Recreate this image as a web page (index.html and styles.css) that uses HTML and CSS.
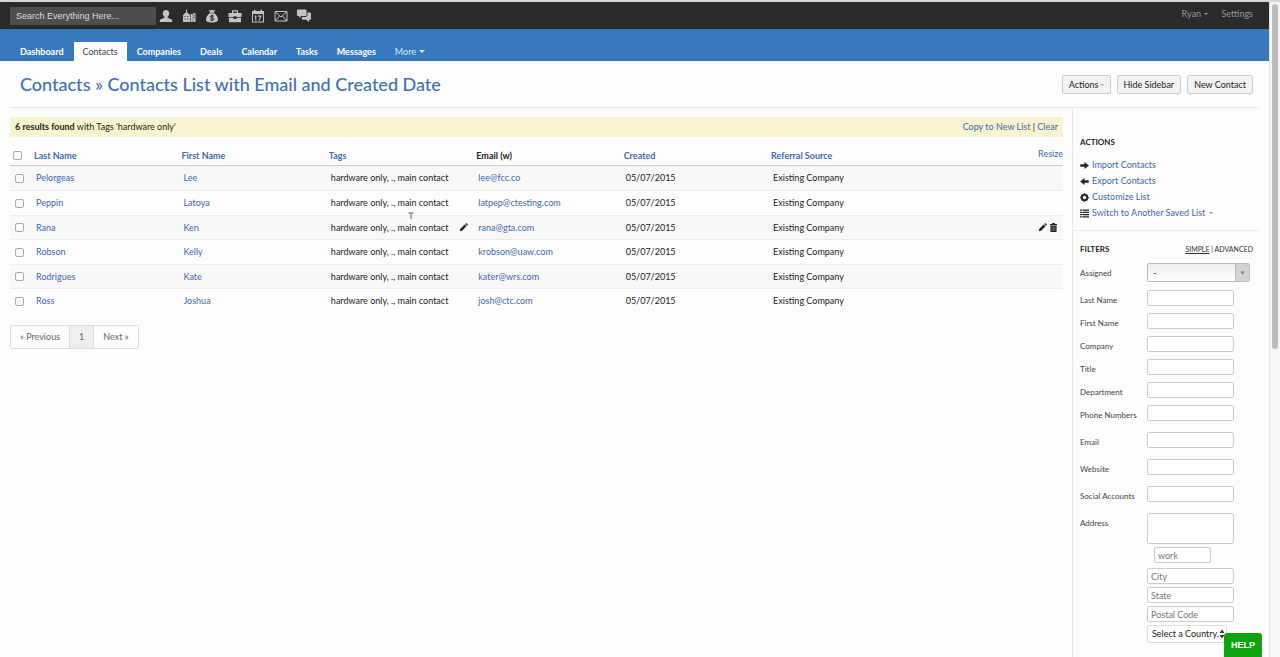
FILE: index.html
```
<!DOCTYPE html>
<html lang="en">
<head>
    <meta charset="UTF-8"/>
    <meta name="viewport" content="width=device-width, initial-scale=1.0"/>
    <title>Contacts List with Email and Created Date</title>
    <link rel="stylesheet" href="styles.css">
</head>

<body>
<div class="page">
    <header class="topbar">
        <input class="search" type="text" placeholder="Search Everything Here..." aria-label="Search everything"/>
        <div class="quick">
            <a href="#" aria-label="Contacts">
                <svg viewBox="0 0 14 14"><path d="M7 1c2 0 3.200 1.300 3.200 3.300 0 1.500-.7 2.800-1.600 3.500v1l3.400 1.400c1 .4 1.300 1 1.300 2.800H.7c0-1.800.3-2.400 1.300-2.800l3.400-1.400v-1C4.500 7.100 3.800 5.800 3.800 4.300 3.800 2.300 5 1 7 1z"/></svg>
            </a>
            <a href="#" aria-label="Companies">
                <svg viewBox="0 0 14 14"><path d="M4 .8h1v2.400L8 6v7H1V6l3-2.800zM8.600 5h2.200v8H8.600zM11.300 4h2.200v9h-2.200z"/><path class="cut" d="M2.500 7h1v1h-1zM5.300 7h1v1h-1zM2.500 9.500h1v1h-1zM5.300 9.500h1v1h-1zM11.900 5.500h.8v1h-.8zM11.900 8h.8v1h-.8z"/></svg>
            </a>
            <a href="#" aria-label="Deals">
                <svg viewBox="0 0 14 14"><path d="M4 .8l1.500.7L7 .7l1.500.8 1.500-.7-.9 3H4.900zM4.800 4.300h4.400C11.500 6 13 8.200 13 10.400 13 12.500 11.500 13.400 7 13.400S1 12.500 1 10.400C1 8.200 2.500 6 4.800 4.300z"/><path class="line" d="M9 7.300C8.200 6.500 5.300 6.400 5.300 7.800c0 1.500 3.600.8 3.600 2.400 0 1.400-3 1.300-3.900.4M7 5.600v6.600"/></svg>
            </a>
            <a href="#" aria-label="Cases">
                <svg viewBox="0 0 14 14"><path d="M4 4V1.200h6V4h3.500v4.200H8.500V7.200h-3v1H.5V4zm1.300 0h3.400V2.500H5.300zM1 9h4.500v1h3V9H13v4.300H1z"/></svg>
            </a>
            <a href="#" aria-label="Calendar">
                <svg viewBox="0 0 14 14"><path d="M1 2h2V.8h1.500V2h5V.8H11V2h2v11.500H1zm1 3v7.500h10V5z"/><path d="M3.700 6.500h1.600v5H4.200V7.700h-.7zM6.700 6.500h3.700v1.100l-1.800 3.900H7.400l1.700-3.800H6.700z"/></svg>
            </a>
            <a href="#" aria-label="Mail">
                <svg viewBox="0 0 14 14"><path class="stroke" d="M1 2.500h12v9.500H1zM1 2.500l6 5.500 6-5.500M1 12l4.500-5M13 12L8.500 7"/></svg>
            </a>
            <a href="#" aria-label="Messages">
                <svg viewBox="0 0 14 14"><path d="M1.300.5h7c.8 0 1.300.5 1.300 1.300v4c0 .8-.5 1.300-1.300 1.300H4.500L2.300 9V7.100h-1C.5 7.100 0 6.600 0 5.800v-4C0 1 .5.500 1.300.500zM10.400 3.500h2.300c.8 0 1.300.5 1.300 1.300v4.600c0 .8-.5 1.300-1.300 1.300H12v2.600l-3-2.600H6.200c-.8 0-1.300-.5-1.300-1.300V8H8c1.600 0 2.400-.8 2.400-2.200z"/></svg>
            </a>
        </div>
        <div class="account">
            <a href="#">Ryan <span class="caret"></span></a>
            <a href="#">Settings</a>
        </div>
    </header>

    <nav class="nav">
        <a href="#">Dashboard</a>
        <a href="#" class="active">Contacts</a>
        <a href="#">Companies</a>
        <a href="#">Deals</a>
        <a href="#">Calendar</a>
        <a href="#">Tasks</a>
        <a href="#">Messages</a>
        <a href="#" class="more">More <span class="caret"></span></a>
    </nav>

    <div class="heading">
        <h1>Contacts » Contacts List with Email and Created Date</h1>
        <div class="buttons">
            <button type="button">Actions<span class="caret"></span></button>
            <button type="button">Hide Sidebar</button>
            <button type="button">New Contact</button>
        </div>
    </div>

    <div class="content">
        <main class="main">
            <div class="notice">
                <span><b>6 results found</b> with Tags 'hardware only'</span>
                <span><a href="#">Copy to New List</a> | <a href="#">Clear</a></span>
            </div>
            <table class="list">
                <thead>
                <tr>
                    <th class="check"><input type="checkbox" aria-label="Select all"/></th>
                    <th><a href="#">Last Name</a></th>
                    <th><a href="#">First Name</a></th>
                    <th><a href="#">Tags</a></th>
                    <th>Email (w)</th>
                    <th><a href="#">Created</a></th>
                    <th><a href="#">Referral Source</a></th>
                    <th class="tools"><a href="#">Resize</a></th>
                </tr>
                </thead>
                <tbody>
                <tr>
                    <td><input type="checkbox" aria-label="Select Pelorgeas"/></td>
                    <td><a href="#">Pelorgeas</a></td>
                    <td><a href="#">Lee</a></td>
                    <td>hardware only, ., main contact</td>
                    <td><a href="#">lee@fcc.co</a></td>
                    <td>05/07/2015</td>
                    <td>Existing Company</td>
                    <td></td>
                </tr>
                <tr>
                    <td><input type="checkbox" aria-label="Select Peppin"/></td>
                    <td><a href="#">Peppin</a></td>
                    <td><a href="#">Latoya</a></td>
                    <td>hardware only, ., main contact</td>
                    <td><a href="#">latpep@ctesting.com</a></td>
                    <td>05/07/2015</td>
                    <td>Existing Company</td>
                    <td></td>
                </tr>
                <tr>
                    <td><input type="checkbox" aria-label="Select Rana"/></td>
                    <td><a href="#">Rana</a></td>
                    <td><a href="#">Ken</a></td>
                    <td>
                        <div class="editable">
                            hardware only, ., main contact
                            <svg class="icon" viewBox="0 0 10 10"><path d="M.8 9.200l.7-2.700L6.300 1.700l2 2L3.500 8.500zM6.900 1.100l.7-.6c.5-.4.900-.3 1.300.1l.5.5c.4.400.5.800.1 1.300l-.6.700z"/></svg>
                        </div>
                    </td>
                    <td><a href="#">rana@gta.com</a></td>
                    <td>05/07/2015</td>
                    <td>Existing Company</td>
                    <td>
                        <div class="row-tools">
                            <svg class="icon" viewBox="0 0 10 10"><path d="M.8 9.200l.7-2.700L6.300 1.700l2 2L3.500 8.500zM6.900 1.100l.7-.6c.5-.4.900-.3 1.300.1l.5.5c.4.400.5.800.1 1.300l-.6.700z"/></svg>
                            <svg class="icon" viewBox="0 0 10 10"><path d="M3.500 1V0h3v1H9v1.500H1V1zM1.600 3h6.800v6.400c0 .4-.2.600-.6.600H2.200c-.4 0-.6-.2-.6-.6z"/><path class="slats" d="M3.300 4v4.800M5 4v4.800M6.700 4v4.800"/></svg>
                        </div>
                    </td>
                </tr>
                <tr>
                    <td><input type="checkbox" aria-label="Select Robson"/></td>
                    <td><a href="#">Robson</a></td>
                    <td><a href="#">Kelly</a></td>
                    <td>hardware only, ., main contact</td>
                    <td><a href="#">krobson@uaw.com</a></td>
                    <td>05/07/2015</td>
                    <td>Existing Company</td>
                    <td></td>
                </tr>
                <tr>
                    <td><input type="checkbox" aria-label="Select Rodrigues"/></td>
                    <td><a href="#">Rodrigues</a></td>
                    <td><a href="#">Kate</a></td>
                    <td>hardware only, ., main contact</td>
                    <td><a href="#">kater@wrs.com</a></td>
                    <td>05/07/2015</td>
                    <td>Existing Company</td>
                    <td></td>
                </tr>
                <tr>
                    <td><input type="checkbox" aria-label="Select Ross"/></td>
                    <td><a href="#">Ross</a></td>
                    <td><a href="#">Joshua</a></td>
                    <td>hardware only, ., main contact</td>
                    <td><a href="#">josh@ctc.com</a></td>
                    <td>05/07/2015</td>
                    <td>Existing Company</td>
                    <td></td>
                </tr>
                </tbody>
            </table>
            <div class="pager">
                <a href="#">« Previous</a>
                <a href="#" class="current">1</a>
                <a href="#">Next »</a>
            </div>
        </main>

        <aside class="sidebar">
            <section class="actions">
                <h2>ACTIONS</h2>
                <ul>
                    <li><svg class="icon" viewBox="0 0 10 10"><path d="M.3 3.700h4.700V1L9.900 5 5 9V6.300H.3z"/></svg><a href="#">Import Contacts</a></li>
                    <li><svg class="icon" viewBox="0 0 10 10"><path d="M9.700 3.700H5V1L.1 5 5 9V6.300h4.700z"/></svg><a href="#">Export Contacts</a></li>
                    <li><svg class="icon" viewBox="0 0 10 10"><circle class="ring" cx="5" cy="5" r="3"/><path class="teeth" d="M5 .4v1.300M5 8.300v1.300M.4 5h1.300M8.300 5h1.300M1.800 1.800l.8.800M7.400 7.400l.8.800M8.200 1.800l-.8.800M2.600 7.400l-.8.800"/></svg><a href="#">Customize List</a></li>
                    <li><svg class="icon" viewBox="0 0 10 10"><path d="M0 .5h2V2H0zM2.700.5H10V2H2.700zM0 3h2v1.500H0zM2.700 3H10v1.500H2.700zM0 5.500h2V7H0zM2.700 5.500H10V7H2.700zM0 8h2v1.500H0zM2.700 8H10v1.500H2.700z"/></svg><a href="#">Switch to Another Saved List <span class="caret"></span></a></li>
                </ul>
            </section>
            <form class="filters">
                <div class="filters-head">
                    <h2>FILTERS</h2>
                    <span class="mode"><a href="#" class="on">SIMPLE</a> | <a href="#">ADVANCED</a></span>
                </div>
                <div class="field assigned">
                    <label for="assigned">Assigned</label>
                    <span class="select">
                        <select id="assigned"><option>-</option></select>
                    </span>
                </div>
                <div class="field"><label for="last">Last Name</label><input type="text" id="last"/></div>
                <div class="field"><label for="first">First Name</label><input type="text" id="first"/></div>
                <div class="field"><label for="company">Company</label><input type="text" id="company"/></div>
                <div class="field"><label for="title">Title</label><input type="text" id="title"/></div>
                <div class="field"><label for="department">Department</label><input type="text" id="department"/></div>
                <div class="field"><label for="phone">Phone Numbers</label><input type="text" id="phone"/></div>
                <div class="field wide"><label for="email">Email</label><input type="text" id="email"/></div>
                <div class="field wide"><label for="website">Website</label><input type="text" id="website"/></div>
                <div class="field wide"><label for="social">Social Accounts</label><input type="text" id="social"/></div>
                <div class="field wide">
                    <label for="address">Address</label>
                    <div class="address">
                        <textarea id="address"></textarea>
                        <input type="text" class="kind" placeholder="work" aria-label="Address type"/>
                        <input type="text" placeholder="City" aria-label="City"/>
                        <input type="text" placeholder="State" aria-label="State"/>
                        <input type="text" placeholder="Postal Code" aria-label="Postal code"/>
                        <span class="country">
                            <select aria-label="Country"><option>Select a Country.</option></select>
                            <svg viewBox="0 0 6 10"><path d="M3 .5L5.500 4h-5zM3 9.500L.5 6h5z"/></svg>
                        </span>
                    </div>
                </div>
            </form>
        </aside>
    </div>
</div>
<svg class="cursor" viewBox="0 0 6 8"><path d="M.5 1h5M3 1v6"/></svg>
<div class="scrollbar"><div class="thumb"></div></div>
<button type="button" class="help">HELP</button>
</body>
</html>
```
FILE: styles.css
```
* {
    box-sizing: border-box;
}

body {
    margin: 0;
    overflow: hidden;
    background-color: #fdfdfd;
    border-top: 2px solid #d4d4d4;
    color: #222;
    font-family: Lato, "Liberation Sans", sans-serif;
    font-size: 9px;
    line-height: 12px;
}

a {
    color: #4068b0;
    text-decoration: none;
}

h1, h2 {
    margin: 0;
}

input, select, textarea, button {
    margin: 0;
    font: inherit;
    color: inherit;
}

.page {
    display: flex;
    flex-direction: column;
    min-height: calc(100vh - 2px);
    margin-right: 11px;
}

.caret {
    display: inline-block;
    margin-left: 1px;
    border: 2px solid transparent;
    border-top-color: currentColor;
    border-bottom: 0;
    vertical-align: 2px;
}

/* top bar */
.topbar {
    display: flex;
    align-items: center;
    height: 27px;
    padding: 0 16px 0 10px;
    background-color: #282a2b;
}

.search {
    width: 146px;
    height: 18px;
    padding: 0 6px;
    border: 0;
    background-color: #4e4e4e;
    font-family: "Liberation Sans", Arial, sans-serif;
}

.search::placeholder {
    color: #ddd;
}

.quick {
    display: flex;
    gap: 9px;
    margin-left: 3px;
}

.quick svg {
    display: block;
    width: 14px;
    height: 14px;
    fill: #c4c4c4;
}

.quick .cut {
    fill: #282a2b;
}

.quick .line {
    fill: none;
    stroke: #282a2b;
}

.quick .stroke {
    fill: none;
    stroke: #c4c4c4;
}

.account {
    display: flex;
    gap: 13px;
    margin-left: auto;
    padding-bottom: 3px;
}

.account a {
    color: #999;
}

/* main menu */
.nav {
    display: flex;
    align-items: flex-end;
    gap: 1px;
    height: 32px;
    padding-left: 11px;
    background-color: #3779be;
}

.nav a {
    height: 19px;
    padding: 4px 9px;
    color: #fff;
    font-weight: bold;
}

.nav .active {
    background-color: #fdfdfd;
    color: #444;
    font-weight: normal;
}

.nav .more {
    color: #dce9f6;
    font-weight: normal;
}

.nav .caret {
    border-width: 3px 3px 0;
}

/* page title */
.heading {
    display: flex;
    align-items: center;
    justify-content: space-between;
    height: 47px;
    margin: 0 10px;
    padding: 0 6px 0 10px;
    border-bottom: 1px solid #e6e6e6;
}

.heading h1 {
    color: #4170b0;
    font-size: 18px;
    font-weight: 500;
    line-height: 24px;
}

.buttons {
    display: flex;
    gap: 6px;
}

.buttons button {
    height: 19px;
    padding: 1px 6px 0;
    border: 1px solid #ccc;
    border-radius: 2px;
    background-color: #f3f3f3;
}

.buttons .caret {
    color: #aaa;
}

.content {
    display: flex;
    flex: 1;
    margin: 0 10px;
}

.main {
    flex: 1;
    padding-top: 9px;
    padding-right: 9px;
}

.notice {
    display: flex;
    align-items: center;
    justify-content: space-between;
    height: 20px;
    padding: 0 5px;
    background-color: #faf3cf;
}

/* contacts table */
.list {
    width: 100%;
    margin-top: 9px;
    border-collapse: separate;
    border-spacing: 0;
    table-layout: fixed;
}

.list th {
    width: 14%;
    height: 20px;
    padding: 0 3px;
    border-bottom: 1px solid #ccc;
    text-align: left;
}

.list .check {
    width: 2%;
}

.list .tools {
    width: auto;
    padding: 2px 0 0;
    font-weight: normal;
    text-align: right;
    vertical-align: top;
}

.list td {
    height: 24px;
    padding: 0 5px;
}

.list tbody tr:nth-child(odd) td {
    height: 25px;
    border-top: 1px solid #ececec;
    border-bottom: 1px solid #ececec;
    background-color: #f8f8f8;
}

.list tbody tr:first-child td {
    border-top: 0;
}

.list input {
    display: block;
    appearance: none;
    width: 9px;
    height: 9px;
    border: 1px solid #aaa;
    border-radius: 2px;
    background-color: #fff;
}

.editable, .row-tools {
    display: flex;
    align-items: center;
    justify-content: space-between;
}

.row-tools {
    justify-content: flex-end;
    gap: 2px;
}

.icon {
    display: block;
    width: 9px;
    height: 9px;
    fill: #222;
}

.slats {
    stroke: #999;
    stroke-width: .7;
}

.pager {
    display: inline-flex;
    margin-top: 12px;
    border: 1px solid #ddd;
    border-radius: 2px;
}

.pager a {
    padding: 5px 9px;
    color: #666;
}

.pager .current {
    border: solid #ddd;
    border-width: 0 1px;
    background-color: #eee;
}

/* sidebar */
.sidebar {
    width: 187px;
    border-left: 1px solid #e6e6e6;
}

.sidebar h2 {
    font-size: 8px;
    line-height: 12px;
}

.actions {
    padding: 28px 7px 9px;
    border-bottom: 1px solid #ececec;
}

.actions ul {
    margin: 9px 0 0;
    padding: 0;
    list-style: none;
}

.actions li {
    display: flex;
    align-items: center;
    gap: 3px;
    height: 16px;
}

.actions .caret {
    color: #999;
}

.ring, .teeth {
    fill: none;
    stroke: #222;
    stroke-width: 2;
}

.filters {
    padding: 12px 0 12px 7px;
}

.filters-head {
    display: flex;
    justify-content: space-between;
    padding-right: 6px;
}

.mode {
    color: #333;
    font-size: 7px;
}

.mode a {
    color: #333;
}

.mode .on {
    text-decoration: underline;
}

.field {
    display: flex;
    align-items: flex-start;
    height: 23px;
}

.field label {
    width: 67px;
    padding-top: 4px;
    color: #444;
    font-size: 8px;
    white-space: nowrap;
}

.field input, .field textarea {
    display: block;
    width: 87px;
    height: 16px;
    padding: 0 3px;
    border: 1px solid #ccc;
    border-radius: 2px;
    background-color: #fff;
}

.field ::placeholder {
    color: #777;
}

.assigned {
    height: 27px;
    margin-top: 8px;
}

.select {
    position: relative;
    width: 103px;
    height: 19px;
    border: 1px solid #bbb;
    border-radius: 2px;
    overflow: hidden;
}

.select select {
    display: block;
    appearance: none;
    width: 100%;
    height: 17px;
    padding: 0 5px;
    border: 0;
    background: linear-gradient(#eee, #fff);
}

/* grey arrow box of the drop-down */
.select::after {
    content: "▼";
    position: absolute;
    top: 0;
    right: 0;
    width: 13px;
    height: 17px;
    border-left: 1px solid #bbb;
    background-color: #d4d4d4;
    color: #777;
    font-size: 6px;
    line-height: 17px;
    text-align: center;
    pointer-events: none;
}

.wide {
    height: 27px;
}

.field:not(.wide) + .wide {
    margin-top: 4px;
}

.wide:last-child {
    height: auto;
}

.address {
    display: flex;
    flex-direction: column;
    gap: 3px;
}

.address textarea {
    height: 31px;
    resize: none;
}

.address .kind {
    width: 57px;
    margin: 0 0 2px 7px;
}

.country {
    position: relative;
    width: 80px;
}

.country select {
    display: block;
    appearance: none;
    width: 100%;
    height: 18px;
    padding: 0 4px;
    border: 1px solid #ddd;
    border-radius: 2px;
    background-color: #fff;
}

.country svg {
    position: absolute;
    top: 4px;
    right: 2px;
    width: 6px;
    height: 10px;
    fill: #333;
    pointer-events: none;
}

/* things that float over the page */
.cursor {
    position: absolute;
    top: 212px;
    left: 408px;
    width: 6px;
    height: 8px;
    fill: none;
    stroke: #666;
}

.scrollbar {
    position: fixed;
    top: 2px;
    right: 0;
    bottom: 0;
    width: 11px;
    padding: 2px;
    border-left: 1px solid #e4e4e4;
    background-color: #f6f6f6;
}

.thumb {
    height: 53%;
    border-radius: 4px;
    background-color: #bcbcbc;
}

.help {
    position: fixed;
    right: 18px;
    bottom: 0;
    height: 24px;
    padding: 0 7px;
    border: 0;
    border-radius: 3px 3px 0 0;
    background-color: #0fa30f;
    color: #fff;
    font: bold 9px "Liberation Sans", Arial, sans-serif;
}
```
